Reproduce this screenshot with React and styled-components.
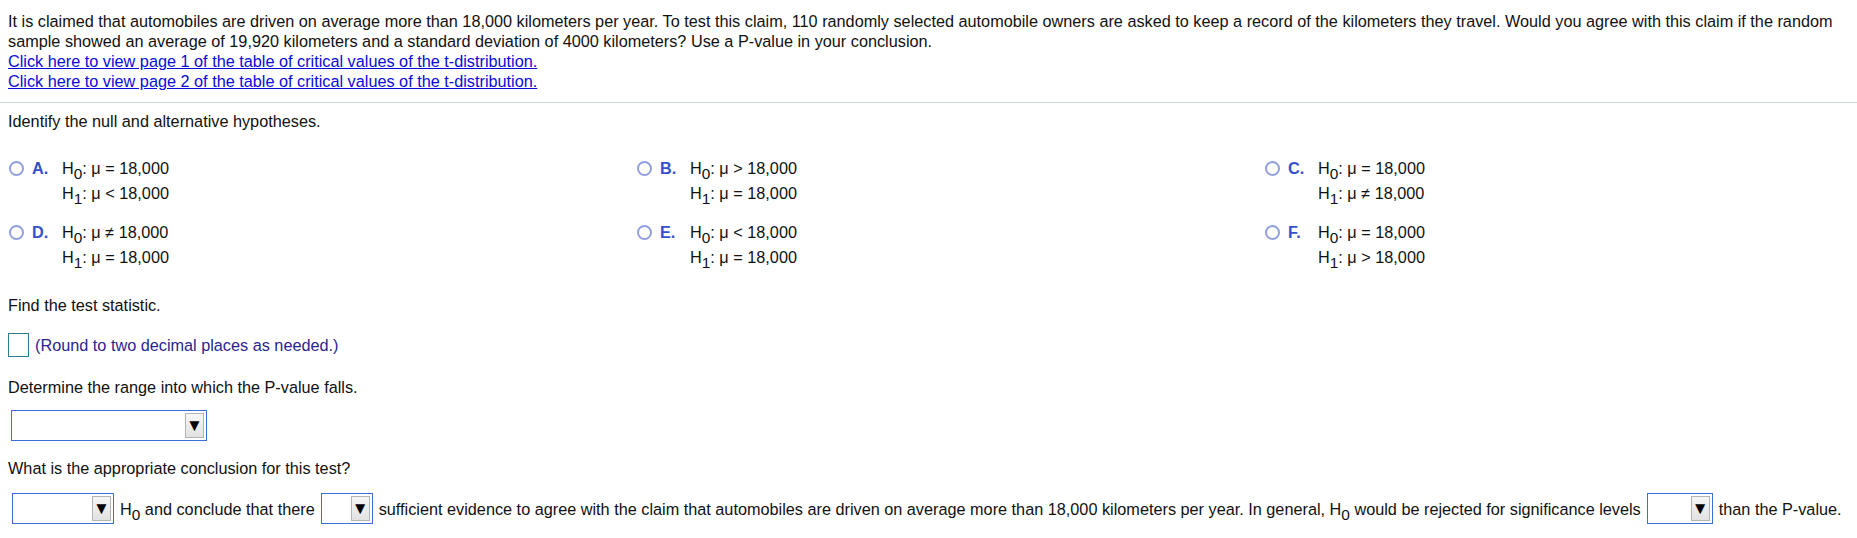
import styled, { createGlobalStyle } from "styled-components";

const GlobalStyle = createGlobalStyle`
  body {
    margin: 0;
    background: #ffffff;
    font-family: "Liberation Sans", Arial, sans-serif;
    font-size: 16.25px;
    line-height: 20px;
    color: #111111;
  }
`;

const options = [
  { letter: "A", h0: "=", h1: "<" },
  { letter: "B", h0: ">", h1: "=" },
  { letter: "C", h0: "=", h1: "≠" },
  { letter: "D", h0: "≠", h1: "=" },
  { letter: "E", h0: "<", h1: "=" },
  { letter: "F", h0: "=", h1: ">" },
];

export default function App() {
  return (
    <>
      <GlobalStyle />
      <Page>
        <Problem>
          <p>
            It is claimed that automobiles are driven on average more than 18,000 kilometers per year. To test this
            claim, 110 randomly selected automobile owners are asked to keep a record of the kilometers they travel.
            Would you agree with this claim if the random sample showed an average of 19,920 kilometers and a standard
            deviation of 4000 kilometers? Use a P-value in your conclusion.
          </p>
          <Link href="#">Click here to view page 1 of the table of critical values of the t-distribution.</Link>
          <Link href="#">Click here to view page 2 of the table of critical values of the t-distribution.</Link>
        </Problem>
        <Divider />
        <Work>
          <Prompt>Identify the null and alternative hypotheses.</Prompt>
          <Choices>
            {options.map((o) => (
              <Choice key={o.letter}>
                <Radio />
                <Letter>{o.letter}.</Letter>
                <Hyp>
                  <span>
                    H<sub>0</sub>: μ {o.h0} 18,000
                  </span>
                  <span>
                    H<sub>1</sub>: μ {o.h1} 18,000
                  </span>
                </Hyp>
              </Choice>
            ))}
          </Choices>

          <Prompt $top={28}>Find the test statistic.</Prompt>
          <AnswerRow>
            <TextBox />
            <Hint>(Round to two decimal places as needed.)</Hint>
          </AnswerRow>

          <Prompt $top={20}>Determine the range into which the P-value falls.</Prompt>
          <SelectRow>
            <Select $w={196} />
          </SelectRow>

          <Prompt $top={17}>What is the appropriate conclusion for this test?</Prompt>
          <Sentence>
            <Select $w={102} />
            <span>
              H<sub>0</sub> and conclude that there
            </span>
            <Select $w={52} />
            <span>
              sufficient evidence to agree with the claim that automobiles are driven on average more than 18,000
              kilometers per year. In general, H<sub>0</sub> would be rejected for significance levels
            </span>
            <Select $w={66} />
            <span>than the P-value.</span>
          </Sentence>
        </Work>
      </Page>
    </>
  );
}

function Select({ $w }) {
  return (
    <DropBox $w={$w}>
      <DropButton>▼</DropButton>
    </DropBox>
  );
}

const Page = styled.div`
  padding-top: 11px;
  sub {
    font-size: 0.95em;
    line-height: 0;
    vertical-align: -5px;
  }
`;

const Problem = styled.div`
  padding: 0 8px;
  p {
    margin: 0;
  }
`;

const Link = styled.a`
  display: block;
  color: #0a0ad8;
  text-decoration: underline;
  width: fit-content;
`;

const Divider = styled.hr`
  border: none;
  border-top: 1px solid #cdd3e2;
  margin: 11px 0 8px;
`;

const Work = styled.div`
  padding: 0 8px;
`;

const Prompt = styled.div`
  margin-top: ${(p) => (p.$top ? p.$top : 0)}px;
`;

const Choices = styled.div`
  display: grid;
  grid-template-columns: repeat(3, 628px);
  row-gap: 19px;
  margin-top: 27px;
`;

const Choice = styled.div`
  display: flex;
  align-items: flex-start;
`;

const Radio = styled.span`
  width: 11px;
  height: 11px;
  margin: 3px 0 0 1px;
  border: 2px solid #909fe0;
  border-radius: 50%;
  flex-shrink: 0;
`;

const Letter = styled.span`
  width: 30px;
  margin-left: 8px;
  font-weight: bold;
  color: #3550c8;
`;

const Hyp = styled.div`
  display: flex;
  flex-direction: column;
  gap: 5px;
`;

const AnswerRow = styled.div`
  display: flex;
  align-items: center;
  gap: 6px;
  margin-top: 18px;
`;

const TextBox = styled.span`
  width: 19px;
  height: 22px;
  border: 1px solid #2a7f93;
  background: #ffffff;
`;

const Hint = styled.span`
  color: #2a2490;
`;

const SelectRow = styled.div`
  display: flex;
  margin-top: 13px;
  padding-left: 3px;
`;

const DropBox = styled.span`
  display: inline-flex;
  justify-content: flex-end;
  align-items: center;
  box-sizing: border-box;
  width: ${(p) => p.$w}px;
  height: 31px;
  padding-right: 2px;
  border: 1px solid #3b6fd4;
  background: #ffffff;
  flex-shrink: 0;
`;

const DropButton = styled.span`
  display: flex;
  align-items: center;
  justify-content: center;
  box-sizing: border-box;
  width: 19px;
  height: 25px;
  border: 1px solid #b4b4b4;
  background: linear-gradient(#f6f6f6, #e2e2e2);
  color: #000000;
  font-size: 17px;
  line-height: 1;
`;

const Sentence = styled.div`
  display: flex;
  align-items: center;
  gap: 6px;
  margin-top: 15px;
  padding-left: 4px;
  white-space: nowrap;
`;
